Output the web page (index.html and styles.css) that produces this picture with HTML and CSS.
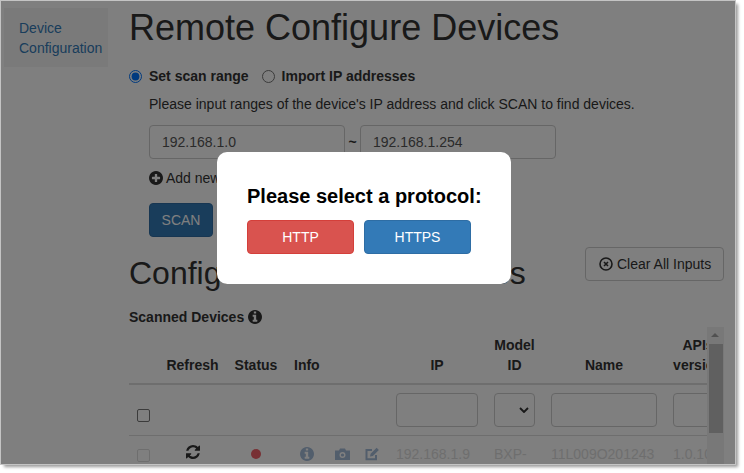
FILE: index.html
```html
<!DOCTYPE html>
<html lang="en">
<head>
    <meta charset="UTF-8">
    <title>Remote Configure Devices</title>
    <link rel="stylesheet" href="styles.css">
</head>
<body>
    <div class="window">
        <div class="page">
            <div class="side">
                <div class="side-item">Device Configuration</div>
            </div>
            <div class="main">
                <h1>Remote Configure Devices</h1>

                <div class="radios">
                    <label class="radio"><input type="radio" name="mode" checked> Set scan range</label>
                    <label class="radio"><input type="radio" name="mode"> Import IP addresses</label>
                </div>
                <p class="hint">Please input ranges of the device's IP address and click SCAN to find devices.</p>

                <div class="range">
                    <input class="field" type="text" value="192.168.1.0">
                    <span class="tilde">~</span>
                    <input class="field" type="text" value="192.168.1.254">
                </div>

                <div class="add-new">
                    <svg class="icon" viewBox="128 128 1536 1536"><path fill="#333" d="M1344 960v-128q0-26-19-45t-45-19h-256v-256q0-26-19-45t-45-19h-128q-26 0-45 19t-19 45v256h-256q-26 0-45 19t-19 45v128q0 26 19 45t45 19h256v256q0 26 19 45t45 19h128q26 0 45-19t19-45v-256h256q26 0 45-19t19-45zm320-64q0 209-103 385.500t-279.500 279.500-385.500 103-385.500-103-279.500-279.500-103-385.500 103-385.500 279.500-279.500 385.500-103 385.500 103 279.500 279.500 103 385.500z"/></svg>
                    Add new range
                </div>

                <button class="btn-scan">SCAN</button>

                <div class="config-head">
                    <h2>Configure Scanned Devices</h2>
                    <button class="btn-clear">
                        <svg class="icon" viewBox="0 0 14 14"><circle cx="7" cy="7" r="6" fill="none" stroke="#333" stroke-width="1.6"/><path d="M5 5l4 4M9 5l-4 4" stroke="#333" stroke-width="1.6"/></svg>
                        Clear All Inputs
                    </button>
                </div>

                <div class="scanned">
                    Scanned Devices
                    <svg class="icon" viewBox="128 128 1536 1536"><path fill="#333" d="M1152 1376v-160q0-14-9-23t-23-9h-96v-512q0-14-9-23t-23-9h-320q-14 0-23 9t-9 23v160q0 14 9 23t23 9h96v320h-96q-14 0-23 9t-9 23v160q0 14 9 23t23 9h448q14 0 23-9t9-23zm-128-896v-160q0-14-9-23t-23-9h-192q-14 0-23 9t-9 23v160q0 14 9 23t23 9h192q14 0 23-9t9-23zm640 416q0 209-103 385.500t-279.500 279.500-385.500 103-385.500-103-279.500-279.500-103-385.500 103-385.500 279.500-279.500 385.500-103 385.500 103 279.500 279.500 103 385.500z"/></svg>
                </div>

                <div class="table-box">
                    <table>
                        <thead>
                            <tr>
                                <th class="col-check"></th>
                                <th class="col-refresh">Refresh</th>
                                <th class="col-status">Status</th>
                                <th class="col-info">Info</th>
                                <th class="col-ip">IP</th>
                                <th class="col-model">Model<br>ID</th>
                                <th class="col-name">Name</th>
                                <th class="col-api">APIs<br>version</th>
                            </tr>
                        </thead>
                        <tbody>
                            <tr class="filters">
                                <td><span class="check dark"></span></td>
                                <td></td>
                                <td></td>
                                <td></td>
                                <td><input class="filter" type="text"></td>
                                <td>
                                    <div class="filter filter-select">
                                        <svg viewBox="0 0 10 6" width="10" height="6"><path d="M1 1l4 4 4-4" fill="none" stroke="#333" stroke-width="1.900"/></svg>
                                    </div>
                                </td>
                                <td><input class="filter" type="text"></td>
                                <td><input class="filter" type="text"></td>
                            </tr>
                            <tr class="device">
                                <td><span class="check"></span></td>
                                <td class="center">
                                    <svg class="icon" viewBox="128 128 1536 1536"><path fill="#333" d="M1639 1056q0 5-1 7-64 268-268 434.500t-478 166.500q-146 0-282.500-55t-243.500-157l-129 129q-19 19-45 19t-45-19-19-45v-448q0-26 19-45t45-19h448q26 0 45 19t19 45-19 45l-137 137q71 66 161 102t187 36q134 0 250-65t186-179q11-17 53-117 8-23 30-23h192q13 0 22.500 9.500t9.500 22.500zm25-800v448q0 26-19 45t-45 19h-448q-26 0-45-19t-19-45 19-45l138-138q-148-137-349-137-134 0-250 65t-186 179q-11 17-53 117-8 23-30 23h-199q-13 0-22.500-9.500t-9.500-22.500v-7q65-268 270-434.500t480-166.500q146 0 284 55.500t245 156.500l130-129q19-19 45-19t45 19 19 45z"/></svg>
                                </td>
                                <td class="center"><span class="dot"></span></td>
                                <td>
                                    <div class="tools">
                                        <svg class="tool-info" viewBox="128 128 1536 1536"><path fill="#a5bcd8" d="M1152 1376v-160q0-14-9-23t-23-9h-96v-512q0-14-9-23t-23-9h-320q-14 0-23 9t-9 23v160q0 14 9 23t23 9h96v320h-96q-14 0-23 9t-9 23v160q0 14 9 23t23 9h448q14 0 23-9t9-23zm-128-896v-160q0-14-9-23t-23-9h-192q-14 0-23 9t-9 23v160q0 14 9 23t23 9h192q14 0 23-9t9-23zm640 416q0 209-103 385.500t-279.500 279.500-385.500 103-385.500-103-279.500-279.500-103-385.500 103-385.500 279.500-279.500 385.500-103 385.500 103 279.500 279.500 103 385.500z"/></svg>
                                        <svg class="tool-camera" viewBox="0 0 15 14"><path d="M0 3.500h4l1-2h5l1 2h4V13H0z" fill="#a5bcd8"/><circle cx="7.500" cy="8" r="2.300" fill="none" stroke="#fff" stroke-width="1.400"/></svg>
                                        <svg class="tool-edit" viewBox="0 0 15 14"><path d="M11 8v4.300H1.500V3H7" fill="none" stroke="#a5bcd8" stroke-width="2"/><path d="M5 9.500l.6-2.800L11.600.8l2.300 2.300-6 5.800z" fill="#a5bcd8"/></svg>
                                    </div>
                                </td>
                                <td>192.168.1.9</td>
                                <td>BXP-</td>
                                <td>11L009O201243</td>
                                <td>1.0.10</td>
                            </tr>
                        </tbody>
                    </table>
                    <div class="scrollbar">
                        <div class="scroll-up"></div>
                        <div class="scroll-thumb"></div>
                    </div>
                </div>
            </div>
        </div>

        <div class="overlay">
            <div class="modal">
                <h3>Please select a protocol:</h3>
                <div class="modal-btns">
                    <button class="btn-http">HTTP</button>
                    <button class="btn-https">HTTPS</button>
                </div>
            </div>
        </div>
    </div>
</body>
</html>
```

FILE: styles.css
```css
*{
    padding: 0;
    margin: 0;
    box-sizing: border-box;
}

body{
    width: 744px;
    height: 473px;
    background: #fff;
    overflow: hidden;
    font-family: "Liberation Sans", Arial, sans-serif;
    font-size: 14px;
    color: #333;
}

/* light edge with a soft shadow outside it */
.window{
    position: relative;
    width: 734px;
    height: 463px;
    margin: 1px 0 0 1px;
    overflow: hidden;
    background: #fff;
    box-shadow: 0 0 0 1px #c4c4c4, 3px 3px 3px rgba(0,0,0,.4);
}

.page{
    display: flex;
    height: 100%;
}

.side{
    width: 128px;
    padding: 7px 0 0 3px;
    flex-shrink: 0;
}

.side-item{
    width: 104px;
    height: 59px;
    padding: 10px 0 0 15px;
    background: #f5f5f5;
    color: #337ab7;
    line-height: 20px;
}

.main{
    flex: 1;
    min-width: 0;
}

h1{
    font-size: 36px;
    font-weight: 400;
    line-height: 40px;
    margin-top: 7px;
    color: #333;
}

.radios{
    display: flex;
    gap: 13px;
    margin-top: 18px;
    line-height: 20px;
}

.radio{
    font-weight: 700;
    display: flex;
    align-items: center;
}

.radio input{
    width: 13px;
    height: 13px;
    margin-right: 7px;
}

.hint{
    margin: 8px 0 0 20px;
    line-height: 20px;
}

.range{
    display: flex;
    align-items: center;
    margin: 11px 0 0 20px;
}

.field{
    width: 196px;
    height: 34px;
    padding: 6px 12px;
    border: 1px solid #ccc;
    border-radius: 4px;
    font: 14px "Liberation Sans", Arial, sans-serif;
    color: #555;
}

.tilde{
    width: 15px;
    text-align: center;
    font-weight: 700;
}

.add-new{
    margin: 9px 0 0 20px;
    line-height: 20px;
    display: flex;
    align-items: center;
    gap: 3px;
}

.icon{
    width: 14px;
    height: 14px;
    flex-shrink: 0;
}

.btn-scan{
    display: block;
    width: 64px;
    height: 34px;
    margin: 15px 0 0 20px;
    background: #337ab7;
    border: 1px solid #2e6da4;
    border-radius: 4px;
    color: #fff;
    font: 14px "Liberation Sans", Arial, sans-serif;
}

.config-head{
    display: flex;
    justify-content: space-between;
    align-items: flex-start;
    margin-top: 10px;
    padding-right: 11px;
}

h2{
    font-size: 32px;
    font-weight: 400;
    line-height: 35px;
    margin-top: 9px;
    color: #333;
}

.btn-clear{
    display: flex;
    align-items: center;
    gap: 4px;
    width: 139px;
    height: 34px;
    padding: 0 0 0 13px;
    background: #fff;
    border: 1px solid #ccc;
    border-radius: 4px;
    color: #333;
    font: 14px "Liberation Sans", Arial, sans-serif;
}

.scanned{
    display: flex;
    align-items: center;
    gap: 4px;
    margin-top: 16px;
    font-weight: 700;
    line-height: 20px;
}

.table-box{
    position: relative;
    width: 595px;
    height: 137px;
    overflow: hidden;
}

table{
    width: 602px;
    table-layout: fixed;
    border-collapse: collapse;
}

th{
    height: 57px;
    padding: 0 0 8px;
    line-height: 20px;
    vertical-align: bottom;
    text-align: center;
    border-bottom: 2px solid #ddd;
    white-space: nowrap;
}

td{
    padding: 8px;
    vertical-align: top;
    line-height: 20px;
    border-bottom: 1px solid #ddd;
}

.col-check{ width: 29px; }
.col-refresh{ width: 69px; }
.col-status{ width: 58px; }
.col-info{ width: 103px; text-align: left; padding-left: 9px; }
.col-ip{ width: 98px; }
.col-model{ width: 57px; }
.col-name{ width: 122px; }
.col-api{ width: 66px; }

.filter{
    display: block;
    width: 100%;
    height: 34px;
    border: 1px solid #ccc;
    border-radius: 4px;
    background: #fff;
}

.filter-select{
    display: flex;
    align-items: center;
    justify-content: flex-end;
    padding-right: 5px;
}

.check{
    display: block;
    width: 13px;
    height: 13px;
    margin-top: 5px;
    border: 1px solid #ddd;
    border-radius: 2px;
    background: #fff;
}

.check.dark{
    margin-top: 16px;
    border-color: #777;
}

.device td{
    white-space: nowrap;
    color: #ddd;
}

.center{
    text-align: center;
}

.dot{
    display: inline-block;
    width: 10px;
    height: 10px;
    margin-top: 5px;
    border-radius: 50%;
    background: #f06068;
}

.tools{
    display: flex;
    align-items: center;
    height: 20px;
    margin-left: 7px;
}

.tool-info{
    width: 14px;
    height: 14px;
    margin-right: 21px;
}

.tool-camera,
.tool-edit{
    width: 15px;
    height: 14px;
}

.tool-camera{
    margin-right: 15px;
}

.scrollbar{
    position: absolute;
    top: 0;
    right: 0;
    width: 17px;
    height: 100%;
    background: #f1f1f1;
}

.scroll-up{
    height: 17px;
    position: relative;
}

.scroll-up::after{
    content: "";
    position: absolute;
    left: 4px;
    top: 6px;
    border-left: 4px solid transparent;
    border-right: 4px solid transparent;
    border-bottom: 4px solid #a3a3a3;
}

.scroll-thumb{
    height: 89px;
    margin: 0 1px 0 2px;
    background: #c1c1c1;
}

.overlay{
    position: absolute;
    inset: 0;
    background: rgba(0,0,0,.5);
}

.modal{
    position: absolute;
    left: 216px;
    top: 151px;
    width: 294px;
    height: 132px;
    padding: 32px 30px 0;
    background: #fff;
    border-radius: 10px;
}

.modal h3{
    font-size: 20px;
    font-weight: 700;
    line-height: 24px;
    color: #000;
    white-space: nowrap;
}

.modal-btns{
    display: flex;
    gap: 10px;
    margin-top: 12px;
}

.modal-btns button{
    width: 107px;
    height: 34px;
    border-radius: 4px;
    color: #fff;
    font: 14px "Liberation Sans", Arial, sans-serif;
}

.btn-http{
    background: #d9534f;
    border: 1px solid #d43f3a;
}

.btn-https{
    background: #337ab7;
    border: 1px solid #2e6da4;
}
```
